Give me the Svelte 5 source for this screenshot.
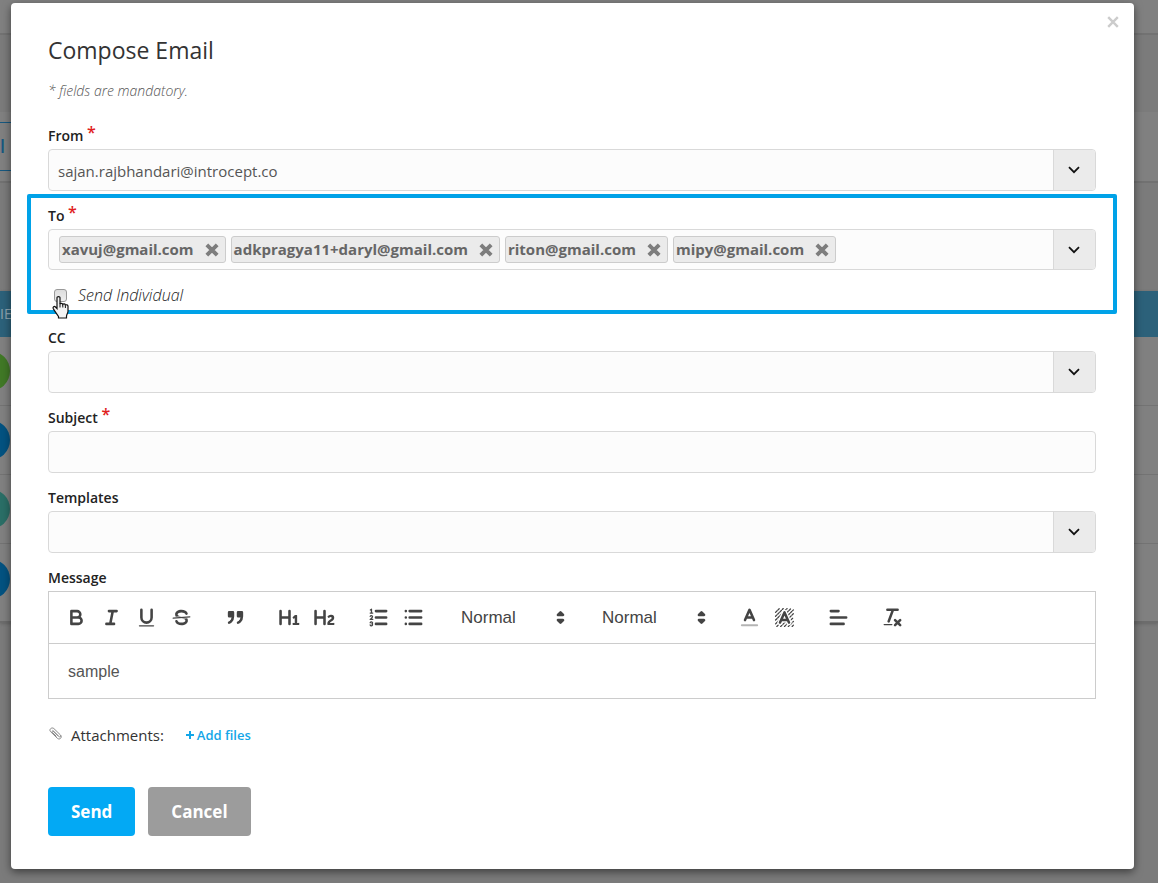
<script>
  let from = $state('sajan.rajbhandari@introcept.co');
  let recipients = $state(['xavuj@gmail.com', 'adkpragya11+daryl@gmail.com', 'riton@gmail.com', 'mipy@gmail.com']);
  let individual = $state(false);
  const rows = ['green', 'blue', 'teal', 'blue'];
  const remove = (r) => (recipients = recipients.filter((x) => x !== r));
</script>

{#snippet chevron()}
  <svg width="12" height="8" viewBox="0 0 12 8" fill="none" stroke="#111" stroke-width="1.8"><path d="M1 1.2 6 6.2 11 1.2" /></svg>
{/snippet}

{#snippet arrows()}
  <svg class="icon" viewBox="0 0 18 18"><path class="solid" d="M7 11 9 13 11 11ZM7 7 9 5 11 7Z" /></svg>
{/snippet}

<div class="screen">
  <div class="page" aria-hidden="true">
    <div class="topbar"></div>
    <div class="spacer"></div>
    <div class="filters"><span class="tab">l</span></div>
    <div class="gap"></div>
    <div class="list">
      <div class="list-head">IE</div>
      {#each rows as color}
        <div class="list-row"><span class="avatar {color}"></span></div>
      {/each}
    </div>
  </div>

  <div class="modal" role="dialog" aria-labelledby="title">
    <button class="close" aria-label="Close">
      <svg width="12" height="12" viewBox="0 0 12 12" stroke="#ccc" stroke-width="2.4"><path d="M1.2 1.2 10.8 10.8M10.8 1.2 1.2 10.8" /></svg>
    </button>
    <h1 id="title">Compose Email</h1>
    <p class="note">* fields are mandatory.</p>

    <form onsubmit={(e) => e.preventDefault()}>
      <div class="field">
        <label for="from">From <sup>*</sup></label>
        <div class="control pick">
          <select id="from" bind:value={from}><option>sajan.rajbhandari@introcept.co</option></select>
          <span class="drop">{@render chevron()}</span>
        </div>
      </div>

      <div class="field highlighted">
        <label for="to">To <sup>*</sup></label>
        <div class="control tokens">
          {#each recipients as r}
            <span class="token">{r}
              <button type="button" aria-label="Remove {r}" onclick={() => remove(r)}>
                <svg width="14" height="14" viewBox="0 0 13 13" stroke="#7d7d7d" stroke-width="3.6"><path d="M1.700 1.700 11.300 11.300M11.300 1.700 1.700 11.300" /></svg>
              </button>
            </span>
          {/each}
          <input id="to" type="text" />
          <button type="button" class="drop" aria-label="Show contacts">{@render chevron()}</button>
        </div>
        <div class="check">
          <input id="individual" type="checkbox" bind:checked={individual} />
          <label for="individual">Send Individual</label>
          <svg class="cursor" width="18" height="23" viewBox="0 0 18 23">
            <path d="M5 1.500c0-1.200 3-1.200 3 0V8c.4-.9 2.600-.8 2.800.4.6-.8 2.500-.6 2.600.7.9-.7 2.600-.2 2.600 1.200v5c0 2-1.500 3-1.500 5V22H6.500v-1.500C5 18 2.500 15 1.200 12.500.600 11 2.200 9.800 3.500 11L5 12.500Z" fill="#f4f4f4" stroke="#111" stroke-width="1.200" />
            <path d="M8 7.500v4M10.800 8.500v3M13.400 9.500v2.500" stroke="#111" />
          </svg>
        </div>
      </div>

      <div class="field">
        <label for="cc">CC</label>
        <div class="control pick">
          <select id="cc"><option></option></select>
          <span class="drop">{@render chevron()}</span>
        </div>
      </div>

      <div class="field">
        <label for="subject">Subject <sup>*</sup></label>
        <div class="control"><input id="subject" type="text" /></div>
      </div>

      <div class="field">
        <label for="templates">Templates</label>
        <div class="control pick">
          <select id="templates"><option></option></select>
          <span class="drop">{@render chevron()}</span>
        </div>
      </div>

      <div class="field">
        <label for="message">Message</label>
        <div class="editor">
          <div class="toolbar">
            <div class="group">
              <button type="button" aria-label="Bold"><svg class="icon" viewBox="0 0 18 18"><path d="M5 4H9.500A2.500 2.500 0 0 1 9.500 9H5ZM5 9h5.500A2.500 2.500 0 0 1 10.500 14H5Z" /></svg></button>
              <button type="button" aria-label="Italic"><svg class="icon" viewBox="0 0 18 18"><path d="M7 4H13M5 14H11M8 14 10 4" /></svg></button>
              <button type="button" aria-label="Underline"><svg class="icon" viewBox="0 0 18 18"><path d="M5 3V9a4 4 0 0 0 8 0V3" /><rect class="fill" x="3" y="15" width="12" height="1" rx=".5" /></svg></button>
              <button type="button" aria-label="Strike"><svg class="icon" viewBox="0 0 18 18"><path class="thin" d="M15.500 8.500 2.500 9.500" /><path class="fill" d="M9.007,8C6.542,7.791,6,7.519,6,6.500,6,5.792,7.283,5,9,5c1.571,0,2.765.679,2.969,1.309a1,1,0,0,0,1.900-.617C13.356,4.106,11.354,3,9,3,6.200,3,4,4.538,4,6.500a3.200,3.200,0,0,0,.5,1.843Z" /><path class="fill" d="M8.984,10C11.457,10.208,12,10.479,12,11.500c0,0.708-1.283,1.500-3,1.500-1.571,0-2.765-.679-2.969-1.309a1,1,0,1,0-1.900.617C4.644,13.894,6.646,15,9,15c2.800,0,5-1.538,5-3.500a3.200,3.200,0,0,0-.5-1.843Z" /></svg></button>
            </div>
            <div class="group">
              <button type="button" aria-label="Quote"><svg class="icon" viewBox="0 0 18 18"><path class="solid" d="M4 5h3v3H4ZM11 5h3v3h-3ZM7 8c0 4.031-3 5-3 5M14 8c0 4.031-3 5-3 5" /></svg></button>
            </div>
            <div class="group">
              <button type="button" aria-label="Heading 1"><svg class="icon" viewBox="0 0 18 18"><path class="fill" d="M10,4V14a1,1,0,0,1-2,0V10H3v4a1,1,0,0,1-2,0V4A1,1,0,0,1,3,4V8H8V4a1,1,0,0,1,2,0Zm6.068,9.209H14.990V7.599a.541.541,0,0,0-.605-.605h-.627a1.011,1.011,0,0,0-.748.297L11.645,8.566a.544.544,0,0,0-.022.858l.286.308a.539.539,0,0,0,.847.033l.099-.088a1.214,1.214,0,0,0,.242-.353h.022s-.011.309-.011.605V13.209H12.041a.541.541,0,0,0-.605.605v.439a.541.541,0,0,0,.605.605h4.027a.541.541,0,0,0,.605-.605v-.439A.541.541,0,0,0,16.068,13.209Z" /></svg></button>
              <button type="button" aria-label="Heading 2"><svg class="icon" viewBox="0 0 18 18"><path class="fill" d="M16.740,13.814v.439a.541.541,0,0,1-.605.605H11.855a.584.584,0,0,1-.649-.605V14.013c0-2.905,3.399-3.422,3.399-4.555a.777.777,0,0,0-.847-.781,1.177,1.177,0,0,0-.836.385c-.275.264-.561.374-.858.132l-.429-.341c-.308-.242-.385-.518-.154-.814a2.972,2.972,0,0,1,2.454-1.177,2.454,2.454,0,0,1,2.684,2.409c0,2.453-3.179,2.927-3.278,3.938h2.794A.541.541,0,0,1,16.740,13.814ZM9,3A1,1,0,0,0,8,4V8H3V4A1,1,0,0,0,1,4V14a1,1,0,0,0,2,0V10H8v4a1,1,0,0,0,2,0V4A1,1,0,0,0,9,3Z" /></svg></button>
            </div>
            <div class="group">
              <button type="button" aria-label="Numbered list"><svg class="icon" viewBox="0 0 18 18"><path d="M7 4H15M7 9H15M7 14H15" /><path class="thin" d="M2.500 5.500H4.500M2.600 3.100 3.500 2.500V5.500M4.500 10.500h-2c0-.234 1.850-1.076 1.850-2.234A.959.959 0 0 0 2.500 8.156M2.500 14.846a.959.959 0 0 0 1.850-.109A.7.7 0 0 0 3.750 14a.688.688 0 0 0 .6-.736.959.959 0 0 0-1.850-.109" /></svg></button>
              <button type="button" aria-label="Bullet list"><svg class="icon" viewBox="0 0 18 18"><path d="M6 4H15M6 9H15M6 14H15M3 4H3M3 9H3M3 14H3" /></svg></button>
            </div>
            <div class="pick size">
              <select aria-label="Size"><option>Normal</option></select>{@render arrows()}
            </div>
            <div class="pick size">
              <select aria-label="Heading"><option>Normal</option></select>{@render arrows()}
            </div>
            <div class="group">
              <button type="button" aria-label="Text colour"><svg class="icon" viewBox="0 0 18 18"><path d="M3 15H15" opacity=".4" stroke-width="1.500" /><path d="M5.500 11 9 3 12.500 11M11.630 9H6.380" /></svg></button>
              <button type="button" aria-label="Background colour"><svg class="icon" viewBox="0 0 18 18"><path class="thin hatch" d="M2 5 5 2M2 8 8 2M2 11 11 2M2 14 14 2M3 16 16 3M6 16 16 6M9 16 16 9M12 16 16 12M15 16 16 15" /><path class="halo" d="M5.500 13 9 5 12.500 13M11.630 11H6.380" /><path d="M5.500 13 9 5 12.500 13M11.630 11H6.380" /></svg></button>
            </div>
            <div class="group">
              <button type="button" aria-label="Align"><svg class="icon" viewBox="0 0 18 18"><path d="M3 9H15M3 14H13M3 4H9" /></svg></button>
            </div>
            <div class="group">
              <button type="button" aria-label="Clear formatting"><svg class="icon" viewBox="0 0 18 18"><path d="M5 3H13M6 12 9.350 3M11 11 15 15M15 11 11 15" /><rect class="fill" x="2" y="14" width="7" height="1" rx=".5" /></svg></button>
            </div>
          </div>
          <textarea id="message" rows="1">sample</textarea>
        </div>
      </div>

      <div class="attach">
        <svg width="13" height="17" viewBox="0 0 14 18" fill="none" stroke="#808080"><path d="M4 3.500 10.500 10c1.200 1.300 3-.4 1.700-1.700L5.200 1.500C3-.4-.4 2.500 1.600 4.800L9 12c2.500 2.200 5.500-1 3.500-3.200M10 9.500 4.800 4.300c-.9-.8-2 .4-1.200 1.200L8 10" /></svg>
        <span>Attachments:</span>
        <button type="button"><svg width="8" height="8" viewBox="0 0 8 8" stroke="#13a6e8" stroke-width="2"><path d="M4 0V8M0 4H8" /></svg>Add files</button>
      </div>

      <div class="actions">
        <button class="send">Send</button>
        <button type="button" class="cancel">Cancel</button>
      </div>
    </form>
  </div>
</div>

<style>
  :global(body) { margin: 0; background: #7b7b7b; }
  * { box-sizing: border-box; }
  .screen { position: relative; min-height: 100vh; overflow: hidden; font-family: "Open Sans", "Noto Sans", sans-serif; color: #333; }
  button, input, select, textarea { font: inherit; color: inherit; margin: 0; padding: 0; border: 0; background: none; outline: 0; appearance: none; }
  button { cursor: pointer; }
  svg { display: block; flex: none; }

  .page { position: absolute; inset: 0; }
  .topbar { height: 35px; background: #808080; border-bottom: 2px solid #727272; }
  .spacer { height: 77px; }
  .filters { height: 71px; background: #808080; border-bottom: 2px solid #717171; padding-top: 10px; }
  .tab { display: block; width: 60px; height: 49px; border: solid #17587f; border-width: 1px 0; line-height: 47px; color: #17587f; font-size: 18px; font-weight: 600; }
  .gap { height: 108px; }
  .list { background: #808080; border-bottom: 2px solid #6c6c6c; padding-bottom: 8px; box-shadow: 0 1px 3px #666; }
  .list-head { height: 46px; background: #2c617a; color: #8fa5b0; line-height: 46px; font-size: 14px; }
  .list-row { height: 69px; border-bottom: 1px solid #737373; display: flex; align-items: center; }
  .list-row:last-child { border-bottom: 0; }
  .avatar { width: 40px; height: 40px; margin-left: -30px; border-radius: 50%; }
  .green { background: #407826; }
  .blue { background: #035280; }
  .teal { background: #2a6e66; }

  .modal { position: relative; margin: 3px 24px 14px 11px; padding: 31px 38px 33px 37px; background: #fff; border-radius: 4px; box-shadow: 0 3px 9px rgba(0, 0, 0, .5); }
  .close { position: absolute; top: 13px; right: 15px; }
  h1 { margin: 0; font-size: 23px; line-height: 32px; font-weight: 500; }
  .note { margin: 15px 0 25px; font-size: 14px; line-height: 20px; font-style: italic; font-weight: 300; color: #555; }
  .field { margin-bottom: 15px; position: relative; }
  .field > label { display: block; margin-bottom: 3px; font-size: 14px; line-height: 20px; font-weight: 600; color: #222; }
  sup { color: #e02020; font-size: 16px; line-height: 0; vertical-align: 3px; }
  .control { height: 42px; border: 1px solid #d9d9d9; border-radius: 4px; background: #fcfcfc; overflow: hidden; font-size: 15px; color: #555; }
  .control > input { width: 100%; height: 100%; padding: 0 10px; }
  .pick { display: grid; }
  .pick > * { grid-area: 1 / 1; }
  .pick select { width: 100%; height: 100%; padding: 0 10px; }
  .control.pick select { padding: 2px 9px 0; }
  .drop { justify-self: end; width: 42px; height: 100%; flex: none; display: flex; align-items: center; justify-content: center; padding-right: 2px; background: #ebebeb; border-left: 1px solid #d9d9d9; pointer-events: none; }
  .tokens { display: flex; align-items: center; gap: 5px; height: 41px; padding-left: 10px; }
  .tokens > input { flex: 1; min-width: 0; padding: 0; }
  .token { display: flex; align-items: center; gap: 11px; height: 27px; padding: 0 6px 0 2px; border: 1px solid #ccc; border-radius: 3px; background: #ebebeb; color: #666; font-weight: 700; line-height: 25px; white-space: nowrap; }
  .highlighted::before { content: ""; position: absolute; inset: -12px -21px -9px; border: 4px solid #00a2e8; border-radius: 2px; pointer-events: none; }
  .highlighted { margin-bottom: 24px; }
  .highlighted::before { bottom: 0; }
  .check { position: relative; display: flex; align-items: center; gap: 11px; height: 20px; margin-top: 15px; padding-left: 6px; font-size: 16px; font-style: italic; font-weight: 300; color: #222; }
  .highlighted { margin-bottom: 14px; padding-bottom: 9px; }
  .check input { width: 13px; height: 13px; border: 1px solid #999; border-radius: 3px; background: linear-gradient(#ddd, #eee); }
  .cursor { position: absolute; left: 4px; top: 11px; }

  .editor { border: 1px solid #ccc; }
  .toolbar { display: flex; align-items: center; gap: 19px; height: 52px; padding: 0 10px; border-bottom: 1px solid #ccc; font-family: "Liberation Sans", Arial, sans-serif; font-size: 17px; color: #444; }
  .group { display: flex; }
  .group button { padding: 6px; }
  .icon { width: 23px; height: 23px; fill: none; stroke: #444; stroke-width: 2; stroke-linecap: round; stroke-linejoin: round; }
  .icon .thin { stroke-width: 1; }
  .icon .fill { fill: #444; stroke: none; }
  .icon .solid { fill: #444; }
  .icon .hatch { stroke-dasharray: 1.500 1; }
  .icon .halo { stroke: #fff; stroke-width: 4; }
  .size { width: 122px; height: 30px; align-items: center; }
  .size svg { justify-self: end; pointer-events: none; }
  .size select { padding: 0 11px 1px; }
  textarea { display: block; width: 100%; height: 54px; padding: 17px 19px 15px; resize: none; font-family: "Liberation Sans", Arial, sans-serif; font-size: 16px; line-height: 22px; color: #555; }

  .attach { display: flex; align-items: center; height: 20px; margin: 26px 0 42px; padding-left: 1px; font-size: 15px; font-weight: 500; }
  .attach span { margin: 0 22px 0 9px; }
  .attach button { display: flex; align-items: center; gap: 3px; font-size: 13px; font-weight: 600; color: #13a6e8; }
  .actions { display: flex; gap: 13px; }
  .actions button { height: 49px; padding: 0 23px; border-radius: 4px; color: #fff; font-size: 17px; font-weight: 700; }
  .send { background: #03a9f4; }
  .cancel { background: #9c9c9c; }
</style>
